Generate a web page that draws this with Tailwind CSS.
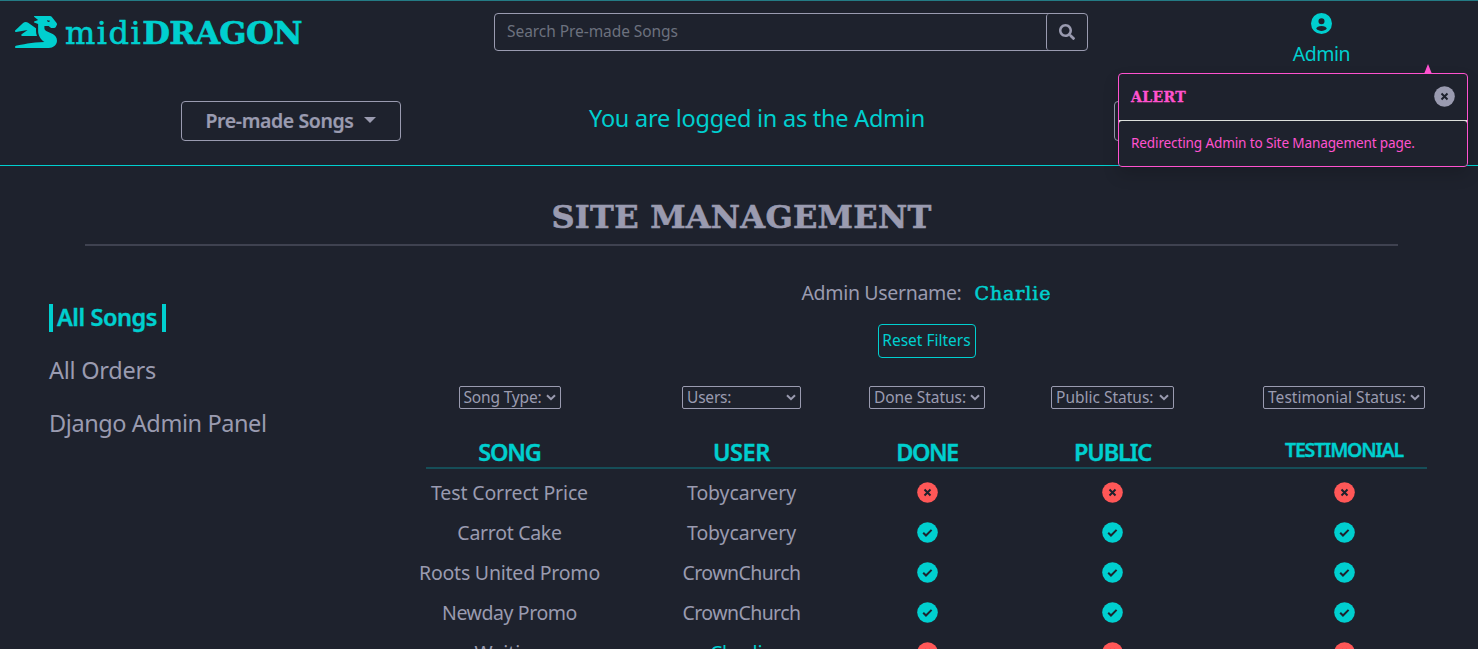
<!DOCTYPE html>
<html lang="en">
<head>
<meta charset="utf-8">
<title>midiDRAGON</title>
<script src="https://cdn.jsdelivr.net/npm/@tailwindcss/browser@4"></script>
</head>
<body class="h-[649px] overflow-hidden bg-[#1e222d] text-[#9a9bb0] font-['Noto_Sans',sans-serif] text-[19.5px] leading-[28px] whitespace-nowrap">
<svg class="hidden">
  <symbol id="yes" viewBox="0 0 21 21"><circle cx="10.5" cy="10.5" r="10.3" fill="#00cfcf"/><path d="M6.2 10.7l2.8 2.8 5.6-5.6" fill="none" stroke="#1e222d" stroke-width="2"/></symbol>
  <symbol id="no" viewBox="0 0 21 21"><circle cx="10.5" cy="10.5" r="10.3" fill="currentColor"/><path d="M7.5 7.5l6 6m0-6l-6 6" fill="none" stroke="#1e222d" stroke-width="2"/></symbol>
  <symbol id="chev" viewBox="0 0 10 7"><path d="M1 1.2l4 4 4-4" fill="none" stroke="#9a9bb0" stroke-width="2"/></symbol>
</svg>

<header class="relative h-[166px] border-t border-b border-t-[#247b85] border-b-[#00cfcf]">
  <div class="grid grid-cols-[494px_594px_1fr] h-[100px] items-start">
    <a class="flex pl-[15px] pt-[14px] text-[#00cfcf]">
      <svg class="mt-px w-[42px] h-[32px]" viewBox="0 0 640 512" preserveAspectRatio="none" fill="currentColor"><path d="M18.32 255.78L192 223.96l-91.28 68.69c-10.08 10.08-2.94 27.31 11.31 27.31h222.7c-9.44-26.4-14.73-54.47-14.73-83.38v-42.27l-119.73-87.6c-23.82-15.88-55.29-14.01-77.06 4.59L5.81 227.64c-12.38 10.33-3.45 30.42 12.51 28.14zm556.87 34.1l-100.66-50.31A47.992 47.992 0 0 1 448 196.65v-36.69h64l28.09 22.63c6 6 14.14 9.37 22.63 9.37h30.97a32 32 0 0 0 28.62-17.69l14.31-28.62a32.005 32.005 0 0 0-3.02-33.51l-74.53-99.38C553.02 4.7 543.54 0 533.47 0H296.02c-7.13 0-10.7 8.57-5.66 13.61L352 63.96 292.42 88.8c-5.9 2.95-5.9 11.36 0 14.31L352 127.96v108.62c0 72.08 36.03 139.39 96 179.38-195.59 6.81-344.56 41.01-434.1 60.91C5.78 478.67 0 485.88 0 494.2 0 504 7.95 512 17.76 512h499.08c63.29.01 119.61-47.56 122.99-110.76 2.52-47.28-22.73-90.4-64.64-111.36zM489.18 66.25l45.65 11.41c-2.75 10.91-12.47 18.89-24.13 18.26-12.96-.71-25.85-12.53-21.52-29.67z"/></svg>
      <span class="ml-[8px] flex items-baseline h-[36px] leading-[36px] font-['DejaVu_Serif',serif] text-[32px]"><span class="tracking-[1.5px] [-webkit-text-stroke:0.6px]">midi</span><span class="font-bold tracking-[-0.7px] [-webkit-text-stroke:0.6px]">DRAGON</span></span>
    </a>
    <form class="mt-[12px] flex h-[38px] rounded-[4px] border border-[#9a9bb0]">
      <div class="flex-1 px-[12px] leading-[35px] text-[15.5px] text-[#6c717e] tracking-[-0.06px]">Search Pre-made Songs</div>
      <div class="flex w-[41px] items-center justify-center rounded-l-[3px] border-l border-[#9a9bb0]"><svg class="size-[16px]" viewBox="0 0 512 512" fill="currentColor"><path d="M505 442.7L405.3 343c-4.5-4.5-10.6-7-17-7H372c27.6-35.3 44-79.7 44-128C416 93.1 322.9 0 208 0S0 93.1 0 208s93.1 208 208 208c48.3 0 92.7-16.4 128-44v16.3c0 6.4 2.5 12.5 7 17l99.7 99.7c9.4 9.4 24.6 9.4 33.9 0l28.3-28.3c9.4-9.4 9.4-24.6.1-34zM208 336c-70.7 0-128-57.2-128-128 0-70.7 57.2-128 128-128 70.7 0 128 57.2 128 128 0 70.7-57.2 128-128 128z"/></svg></div>
    </form>
    <a class="flex flex-col items-center pl-[77px] pt-[12px] text-[#00cfcf]">
      <svg class="size-[21px]" viewBox="2 2 20 20" fill="currentColor" fill-rule="evenodd"><path d="M12 2a10 10 0 1 0 0 20a10 10 0 1 0 0-20zM12 6.9a2.9 2.9 0 1 1 0 5.8a2.9 2.9 0 1 1 0-5.8zM7 17.1c0-1.700 2.300-2.800 5-2.800s5 1.100 5 2.800c-1.200 1.300-3 2-5 2s-3.800-.7-5-2z"/></svg>
      <span class="mt-[6px] tracking-[-0.5px]">Admin</span>
    </a>
  </div>
  <div class="flex pl-[181px]">
    <div class="flex h-[40px] w-[220px] items-center justify-center rounded-[4px] border border-[#9a9bb0] font-semibold"><span class="tracking-[-0.4px] [-webkit-text-stroke:0.2px]">Pre-made Songs</span><i class="ml-[11px] mb-[3px] border-x-[6px] border-t-[6px] border-x-transparent border-t-[#9a9bb0]"></i></div>
    <div class="ml-[188px] w-[525px] pt-[3px] text-[23.5px] text-[#00cfcf] tracking-[-0.25px]">You are logged in as the Admin</div>
    <div class="h-[40px] w-[220px] rounded-[4px] border border-[#9a9bb0]"></div>
  </div>

  <aside class="absolute left-[1118px] top-[72px] z-10 h-[94px] w-[350px] rounded-[4px] border border-[#ff52cf] bg-[#1e222d] text-[#ff52cf] shadow-[0_8px_16px_rgba(0,0,0,0.15)]">
    <i class="absolute right-[35px] -top-[10px] border-x-[4px] border-b-[10px] border-x-transparent border-b-[#ff52cf]"></i>
    <div class="flex h-[46px] items-center justify-between px-[12px]"><span class="font-['DejaVu_Serif',serif] text-[14px] font-bold tracking-[0.4px] [-webkit-text-stroke:0.3px]">ALERT</span><svg class="mb-px size-[21px] text-[#9a9bb0]"><use href="#no"/></svg></div>
    <div class="h-[46px] rounded-b-[3px] bg-[#dde0dc] pt-px"><div class="h-[45px] rounded-[3px] bg-[#1e222d] px-[12px] text-[13.6px] leading-[43px] tracking-[-0.15px]">Redirecting Admin to Site Management page.</div></div>
  </aside>
</header>

<h1 class="mx-auto mt-[31px] h-[49px] w-[1313px] border-b-2 border-[#3f4250] text-center font-['DejaVu_Serif',serif] text-[32px] font-bold leading-[41px] tracking-[0.24px] [-webkit-text-stroke:0.6px] relative left-[2.500px]">SITE MANAGEMENT</h1>

<main class="flex">
  <nav class="flex w-[370px] shrink-0 flex-col gap-[25px] pl-[49px] pt-[58px] text-[23.5px]">
    <a class="-mb-px h-[28px] self-start border-x-4 border-[#00cfcf] pl-[4px] pr-[5px] leading-[27px] font-semibold text-[#00cfcf] tracking-[-0.44px] [-webkit-text-stroke:0.4px]">All Songs</a>
    <a class="tracking-[-0.25px] leading-[28px]">All Orders</a>
    <a class="tracking-[-0.42px] leading-[28px]">Django Admin Panel</a>
  </nav>
  <section class="w-[1113px] shrink-0">
    <div class="flex justify-center gap-[13px] pt-[33px]"><span class="tracking-[-0.33px]">Admin Username:</span><span class="font-['DejaVu_Serif',serif] text-[19px] tracking-[0.92px] text-[#00cfcf] [-webkit-text-stroke:0.5px]">Charlie</span></div>
    <div class="mx-auto mt-[17px] h-[34px] w-[98px] rounded-[4px] border border-[#00cfcf] text-center text-[15.5px] leading-[30px] text-[#00cfcf]">Reset Filters</div>
    <div class="mt-[28px] grid grid-cols-[279px_185px_186px_185px_278px] justify-items-center text-[15.5px] leading-[21px]">
      <div class="flex h-[23px] w-[102px] items-center justify-between rounded-[2px] border border-[#9a9bb0] pl-[4px] pr-[4px]"><span class="tracking-[-0.17px]">Song Type:</span><svg class="h-[7px] w-[10px]"><use href="#chev"/></svg></div>
      <div class="flex h-[23px] w-[119px] items-center justify-between rounded-[2px] border border-[#9a9bb0] pl-[4px] pr-[4px]"><span class="tracking-[-0.2px]">Users:</span><svg class="h-[7px] w-[10px]"><use href="#chev"/></svg></div>
      <div class="flex h-[23px] w-[116px] items-center justify-between rounded-[2px] border border-[#9a9bb0] pl-[4px] pr-[4px]"><span class="tracking-[-0.05px]">Done Status:</span><svg class="h-[7px] w-[10px]"><use href="#chev"/></svg></div>
      <div class="flex h-[23px] w-[123px] items-center justify-between rounded-[2px] border border-[#9a9bb0] pl-[4px] pr-[4px]"><span>Public Status:</span><svg class="h-[7px] w-[10px]"><use href="#chev"/></svg></div>
      <div class="flex h-[23px] w-[162px] items-center justify-between rounded-[2px] border border-[#9a9bb0] pl-[4px] pr-[4px]"><span class="tracking-[0.05px]">Testimonial Status:</span><svg class="h-[7px] w-[10px]"><use href="#chev"/></svg></div>
    </div>
    <div class="mt-[28px] grid h-[30px] grid-cols-[279px_185px_186px_185px_278px] justify-items-center text-[23.5px] leading-[30px] font-semibold text-[#00cfcf] [-webkit-text-stroke:0.4px]">
      <span class="tracking-[-1.2px]">SONG</span><span class="tracking-[-0.4px]">USER</span><span class="tracking-[-1.5px]">DONE</span><span class="tracking-[-1.17px]">PUBLIC</span><span class="text-[19.5px] leading-[26px] tracking-[-1.17px]">TESTIMONIAL</span>
    </div>
    <div class="ml-[56px] h-[2px] w-[1001px] bg-[#164e58]"></div>
    <div class="mt-[4px] grid auto-rows-[40px] grid-cols-[279px_185px_186px_185px_278px] items-center justify-items-center text-[#9a9bb0] [&_svg]:size-[21px] [&_svg]:mb-px">
      <span class="tracking-[-0.14px]">Test Correct Price</span><span class="tracking-[-0.1px]">Tobycarvery</span><svg class="text-[#ff5757]"><use href="#no"/></svg><svg class="text-[#ff5757]"><use href="#no"/></svg><svg class="text-[#ff5757]"><use href="#no"/></svg>
      <span class="tracking-[-0.3px]">Carrot Cake</span><span class="tracking-[-0.1px]">Tobycarvery</span><svg><use href="#yes"/></svg><svg><use href="#yes"/></svg><svg><use href="#yes"/></svg>
      <span class="tracking-[-0.22px]">Roots United Promo</span><span class="tracking-[-0.57px]">CrownChurch</span><svg><use href="#yes"/></svg><svg><use href="#yes"/></svg><svg><use href="#yes"/></svg>
      <span class="tracking-[-0.42px]">Newday Promo</span><span class="tracking-[-0.57px]">CrownChurch</span><svg><use href="#yes"/></svg><svg><use href="#yes"/></svg><svg><use href="#yes"/></svg>
      <span>Waiting</span><span class="text-[#00cfcf] tracking-[-0.2px]">Charlie</span><svg class="text-[#ff5757]"><use href="#no"/></svg><svg class="text-[#ff5757]"><use href="#no"/></svg><svg class="text-[#ff5757]"><use href="#no"/></svg>
    </div>
  </section>
</main>
</body>
</html>
